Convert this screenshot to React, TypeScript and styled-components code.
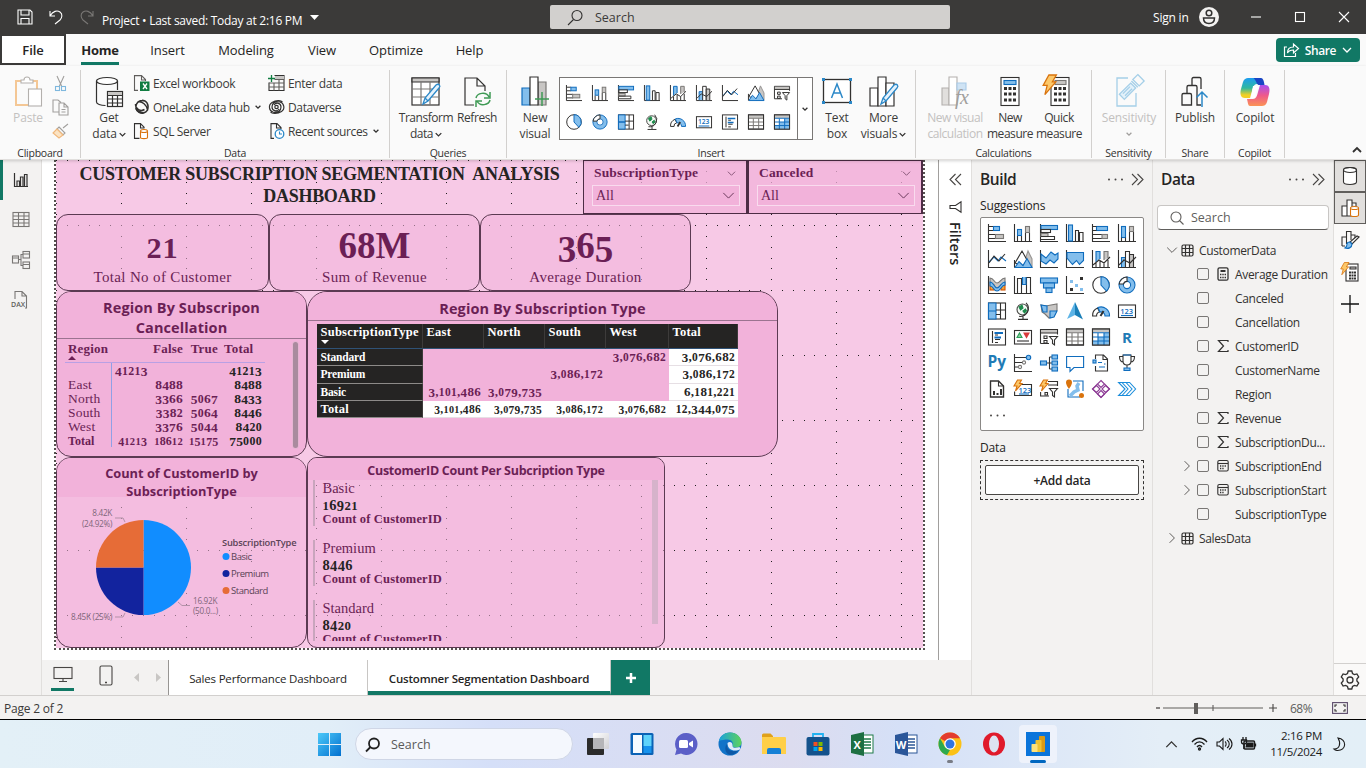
import React from "react";
import styled, { createGlobalStyle, css } from "styled-components";

const INK = "#323130";
const BLUE = "#0f6cbd";
const SKY = "#83beec";
const GREY = "#c8c6c4";
const GREEN = "#117865";
const PLUM = "#6b1f55";
const UI = `"Open Sans", "Noto Sans", sans-serif`;
const SERIF = `"Liberation Serif", serif`;

const Global = createGlobalStyle`
  *, *::before, *::after { box-sizing: border-box; }
  body { margin: 0; font-family: ${UI}; font-size: 12px; color: #252423; overflow: hidden; }
  svg { display: block; flex: none; overflow: visible; }
`;

/* ---------- icons ---------- */

type IconProps = { w?: number; h?: number; box?: string; children?: React.ReactNode; color?: string; sw?: number };
const Icon = ({ w = 16, h, box, children, color = INK, sw = 1.1 }: IconProps) => (
  <svg width={w} height={h ?? w} viewBox={box ?? `0 0 ${w} ${h ?? w}`} fill="none" stroke={color} strokeWidth={sw}>
    {children}
  </svg>
);

const Chevron = ({ w = 7, color = INK, dir = "down", sw = 1.3 }: { w?: number; color?: string; dir?: string; sw?: number }) => (
  <Icon w={w} box="0 0 10 10" color={color} sw={(sw * 10) / w}>
    <path d={dir === "down" ? "M1 3l4 4 4-4" : dir === "up" ? "M1 7l4-4 4 4" : "M3 1l4 4-4 4"} />
  </Icon>
);

const DoubleChevron = ({ left }: { left?: boolean }) => (
  <Icon w={13} sw={1.1} color="#484644">
    <path d={left ? "M6.5 1L1 6.5 6.5 12M12 1L6.5 6.5 12 12" : "M1 1l5.5 5.5L1 12M6.5 1L12 6.5 6.5 12"} />
  </Icon>
);

const axis = <path d="M.5 0V17.5H18" stroke={INK} />;
const glyphs: Record<string, React.ReactNode> = {
  barStack: <>{axis}<path d="M1 2.5h4.500M1 6.500h4.500M1 10.500h7M1 14.500h7" /><rect x="5.500" y="2.500" width="6" height="4" fill={SKY} stroke={BLUE} /><rect x="7.500" y="10.500" width="8" height="4" fill={GREY} stroke="#797775" /></>,
  colStack: <>{axis}<rect x="3.500" y="5.500" width="4" height="6" fill={SKY} stroke={BLUE} /><path d="M3.500 12v5M7.500 12v5M11.500 9v8M15.500 9v8" /><rect x="11.500" y="2.500" width="4" height="6" fill={GREY} stroke="#797775" /></>,
  barCluster: <>{axis}<rect x="1" y="1.500" width="16.500" height="4" fill={SKY} stroke={BLUE} /><rect x="1" y="5.500" width="9.500" height="3" fill="#fff" /><rect x="1" y="9.500" width="7" height="3" fill={GREY} stroke="#797775" /><path d="M1 12.500h13.500v3H1" /></>,
  colCluster: <>{axis}<rect x="2.500" y="1" width="4" height="16" fill={SKY} stroke={BLUE} /><path d="M9.500 17V6.500h3V17M13.500 17V8.500h3.500V17" /></>,
  barFull: <>{axis}<rect x="4.500" y="2.500" width="11" height="4" fill={SKY} stroke={BLUE} /><path d="M1 2.500h3.500M1 6.500h3.500M1 10.500h9M1 14.500h9" /><rect x="10" y="10.500" width="5.500" height="4" fill={GREY} stroke="#797775" /></>,
  colFull: <>{axis}<rect x="3.500" y="2.500" width="4" height="11" fill={SKY} stroke={BLUE} /><path d="M3.500 13.500V17M7.500 13.500V17M11.500 8v9M15.500 8v9" /><rect x="11.500" y="2.500" width="4" height="5" fill={GREY} stroke="#797775" /></>,
  line: <>{axis}<path d="M1 12l5-5 4 4 3-4 5 4" stroke={BLUE} /><path d="M1 13l5-7 5 5 6-7" /></>,
  area: <><path d="M9 16L14 1l4 8v8H9z" fill={GREY} stroke="#979593" /><path d="M1 13l7-12 5 9-4 6z" fill="#fff" /><path d="M1 17.500l4-6 4 4 4-7 5 9z" fill={SKY} stroke={BLUE} /><path d="M.5 10v7.500" /></>,
  areaStack: <>{axis}<path d="M1 4l5 4 5-6 4 3 3-2v6l-4 4-4-3-4 4-5-3z" fill={SKY} stroke={BLUE} /></>,
  areaFull: <>{axis}<path d="M1 2.500h16.500v8l-4 4-3-4-4 4L1 8z" fill={SKY} stroke={BLUE} /></>,
  comboStack: <>{axis}<path d="M4 12V1.500h4V9" fill={SKY} stroke={BLUE} /><path d="M12 10V1.500h4V8" fill={GREY} stroke="#797775" /><path d="M1 15l6-5 5 3 6-6M4 13v4M8 11v6M12 13v4M16 10v7" /></>,
  comboCol: <>{axis}<path d="M3.500 17V7.500h4v9.500" fill={SKY} stroke={BLUE} /><path d="M7.500 17V1.500h4V17" fill="#fff" /><path d="M11.500 17V4.500h4V17" fill={GREY} /><path d="M1 15l5-5 6 3 6-6" /></>,
  ribbon: <><path d="M2 2c4 0 4 5 7 5s4-5 8-5v6c-4 0-5 4-8 4S6 8 2 8z" fill={GREY} stroke="#797775" /><rect x="2" y="9" width="4" height="5" fill="#f2a33a" stroke="#d35400" /><rect x="13" y="9" width="4" height="5" fill="#f2a33a" stroke="#d35400" /><path d="M2 6c4 0 4 6 7 6s4-6 8-6v3c-4 0-4 6-8 6S6 10 2 10z" fill={SKY} stroke={BLUE} />{axis}</>,
  waterfall: <>{axis}<path d="M3.500 17V2.500h4V17M12.500 17V1.500h4V17M7.500 5.500H9" /><path d="M8.500 1v7.500h3.500V1" stroke={BLUE} fill={SKY} /></>,
  funnel: <><rect x=".5" y="2" width="17" height="5" fill={SKY} stroke={BLUE} /><rect x="3.500" y="7" width="11" height="5" fill={SKY} stroke={BLUE} /><rect x="6" y="12" width="6" height="4.500" fill={SKY} stroke={BLUE} /></>,
  scatter: <>{axis}<g stroke="none"><path d="M4 4h3v3H4zM9 8h3v3H9zM14 12h3v3h-3z" fill={SKY} /><path d="M14 1h3v3h-3zM4 12h3v3H4z" fill={INK} /></g></>,
  pie: <><circle cx="9" cy="9" r="8.200" fill="#fff" /><path d="M9 9V.8a8.200 8.200 0 0 1 5.500 14.200z" fill={SKY} stroke={BLUE} /></>,
  donut: <><circle cx="9" cy="9" r="5.800" stroke={SKY} strokeWidth="4" /><circle cx="9" cy="9" r="8" stroke={BLUE} /><circle cx="9" cy="9" r="3.600" stroke={BLUE} fill="#fff" /><path d="M9 1a8 8 0 0 0-7.800 7H5.500A3.600 3.600 0 0 1 9 5.400z" fill="#fff" /></>,
  treemap: <><rect x=".5" y="1" width="17" height="16" fill="#fff" /><path d="M.5 1H8v8H.5zM.5 9H8v8H.5z" fill={SKY} stroke={BLUE} /><path d="M8 8h9.500M12.500 1v7M12.500 8v9M8 12.500h4" /></>,
  map: <><circle cx="8.500" cy="7.500" r="5.500" fill="#f4faf5" stroke="#484644" /><path d="M5 5l3-2 1 3-2.500 2zM9 9l2.500-2 1 2-2 2z" fill="#1f8b4c" stroke="#1f8b4c" /><path d="M12 .8a8 8 0 0 1-7 13.500M9 14.500v2.500M4 17.400h10" /></>,
  filled: <><path d="M1 3l5 1 5-1 6-1v6l-3 6-5 2-4-4-3-2z" fill={GREY} stroke="#797775" /><path d="M1 3l6 1v6H3zM10 9h7l-3 6-4 1z" fill={SKY} stroke={BLUE} /></>,
  arrow: <g stroke="none"><path d="M9 0L1 17l8-4z" fill="#5cb3e6" /><path d="M9 0l8 17.500L9 13z" fill="#1a7fb8" /></g>,
  gauge: <><path d="M.6 14a8 8 0 0 1 5-8l2 4a3.500 3.500 0 0 0-3 4z" fill="#fff" /><path d="M6 5.500a8.500 8.500 0 0 1 11.500 8.500H13a4 4 0 0 0-5-4z" fill={SKY} stroke={BLUE} /><path d="M8.500 14l3-5" strokeWidth="2" /></>,
  card: <><rect x=".5" y="3" width="17" height="12.500" fill="#fff" /><text x="2.200" y="11.500" fontSize="7.500" fill={BLUE} stroke="none" fontWeight="600" fontFamily="Open Sans, sans-serif">123</text><path d="M3 13.500h12" stroke={BLUE} /></>,
  multi: <><rect x=".5" y="1" width="17" height="16" fill="#fff" /><path d="M4.500 3v12M7 7h3M7 11.500h5M7 14.500h3" /><path d="M6.500 5h8.500M6.500 9.500h6.500" stroke={BLUE} strokeWidth="1.800" /></>,
  kpi: <><rect x=".5" y="2.500" width="17" height="13.500" fill="#fff" /><path d="M5.500 5l2.500 4.500H3z" fill="#8fcf9f" stroke="#2ca05a" /><path d="M12.500 9.500L10 5h5z" fill="#d83b3b" stroke="#d83b3b" /><path d="M3 13h12" /></>,
  slicer: <><path d="M.5 15.500V1.500h17v5M.5 15.500H9" /><path d="M1 2h16v3H1z" fill={GREY} stroke="none" /><path d="M.5 5h17M4 8h3v2.500H4zM4 12.500h3V15H4z" /><path d="M9.500 8.500h8L14.500 12v5L12.500 15.500V12z" fill="#fff" /></>,
  table: <><rect x=".5" y="1" width="17" height="16" fill="#fff" /><path d="M1 1.500h16v3H1z" fill={GREY} stroke="none" /><path d="M.5 4.800h17M.5 9h17M.5 13h17M6 5v12M12 5v12" stroke="#797775" /><rect x=".5" y="1" width="17" height="16" /></>,
  matrix: <><rect x=".5" y="1" width="17" height="16" fill="#fff" /><path d="M1 1.500h16v3H1z" fill={GREY} stroke="none" /><path d="M12 5h5.500v12H12zM1 13h11v4H1zM6 9h6v4H6z" fill={SKY} stroke="none" /><path d="M.5 4.800h17M.5 9h17M.5 13h17M6 5v12M12 5v12" stroke={BLUE} /><rect x=".5" y="1" width="17" height="16" /></>,
  r: <text x="4" y="14.500" fontSize="15" fontWeight="700" fill="#1f7bb6" stroke="none" fontFamily="Open Sans, sans-serif">R</text>,
  py: <text x="-.5" y="13" fontSize="15.500" fontWeight="700" fill="#1f7bb6" stroke="none" fontFamily="Open Sans, sans-serif">Py</text>,
  influencer: <>{axis}<path d="M1 3.500h11M1 8.500h7M1 13h3" /><circle cx="14.500" cy="3.500" r="2.200" fill={SKY} stroke={BLUE} /><circle cx="10" cy="8.500" r="1.600" stroke="#797775" /><circle cx="6" cy="13" r="1.600" stroke="#797775" /></>,
  decomp: <><path d="M6 9h6M9.500 3v12M9.500 3h3M9.500 15h3" /><g fill={SKY} stroke={BLUE}><rect x=".5" y="7" width="6" height="4" /><rect x="12" y="1" width="5.500" height="4" /><rect x="12" y="7" width="5.500" height="4" /><rect x="12" y="13" width="5.500" height="4" /></g></>,
  qa: <path d="M.6 2.500h17v11H8l-4 4v-4H.6z" fill="#fff" stroke={BLUE} />,
  narrative: <><path d="M3.500 5V1h8l4 4v12h-12v-5M11 1v4.500h4.500" /><rect x="1" y="6" width="3" height="3" fill={SKY} stroke={BLUE} /><path d="M6 8.500h4M7 13h6M12 10h1.500" stroke={BLUE} /></>,
  trophy: <><path d="M5 1h8v6c0 3-2 4-4 4S5 10 5 7zM5 2.500H1.500C1.500 6 3 8 5.500 8M13 2.500h3.500C16.500 6 15 8 12.500 8M9 11v3" /><path d="M5 1h8M6 14h6v2.500H6z" stroke={BLUE} fill={SKY} /></>,
  paginated: <><path d="M2.500 1h8l5 5v11h-13z" fill="#fff" strokeWidth="1.400" /><path d="M10.500 1v5h5" /><g fill={INK} stroke="none"><path d="M5 11h2v4H5zM8.500 13h2v2h-2zM12 9h2v6h-2z" /></g></>,
  quickCard: <><path d="M7 4.500h10.500v11H.6v-4" /><text x="4.500" y="12.500" fontSize="7.500" fill={BLUE} stroke="none" fontWeight="600" fontFamily="Open Sans, sans-serif">123</text><path d="M5 14h10" stroke={BLUE} /><path d="M3.500 0h4L5.500 3.500H8L1.500 11l1.500-5H0z" fill="#fcc86a" stroke="#d9730d" /></>,
  quickSlicer: <><path d="M8 1.500h9.500v4.500M.6 12v4H9M8 5h9.500" /><path d="M9.500 8.500h8L14.500 12v5L12.500 15.500V12zM5 12.500h2.500V15H5z" fill="#fff" /><path d="M3.500 0h4L5.500 3.500H8L1.500 11l1.500-5H0z" fill="#fcc86a" stroke="#d9730d" /></>,
  arcgis: <><path d="M2 9v8h12M7 1h10v10" stroke={BLUE} /><path d="M13 3l-2 3 1 4-4 2-4 4" stroke={SKY} strokeWidth="3.500" /><path d="M3-.5a3 3 0 0 1 3 3C6 5 3 9 3 9S0 5 0 2.500a3 3 0 0 1 3-3z" fill="#d9730d" stroke="none" /><circle cx="15.500" cy="15.500" r="2.500" fill="#d9730d" stroke="none" /></>,
  apps: <g stroke="#8e3d96" fill="#fff"><path d="M9 .500l3.500 3.500L9 7.500 5.500 4zM4.500 5.500L8 9l-3.500 3.500L.500 9zM13.500 5.500L17.500 9l-4 3.500L10 9zM9 10.500l3.500 3.500L9 17.500 5.500 14z" /><path d="M5.500 4L.500 9 9 17.500 17.500 9l-5-5" fill="none" /></g>,
  automate: <g stroke="#1b8ddb"><path d="M.6 2.500h11l6 6.500-6 6.500H.6L7 9z" fill="#fff" /><path d="M4 2.500L10 9l-6 6.500M8 2.500L14 9l-6 6.500" /></g>,
};
const Glyph = ({ name, size = 18 }: { name: string; size?: number }) => (
  <Icon w={size} box="0 0 18 18" sw={1.100}>{glyphs[name]}</Icon>
);

const Bolt = <path d="M6 0h6.500L9 6h3L2.500 17l2-8H1z" fill="#fcc86a" stroke="#d9730d" />;

/* ---------- title bar ---------- */

const TitleBar = styled.header`
  display: flex; align-items: center; height: 34px; background: #3b3a39; color: #fff; padding-left: 17px;
`;
const QuickAccess = styled.div`display: flex; gap: 15px; width: 85px;`;
const DocName = styled.div`
  display: flex; align-items: center; gap: 8px; width: 448px; padding-top: 6px; font-size: 12px; letter-spacing: -0.27px; white-space: pre;
  svg { margin-top: -5px; }
`;
const TopSearch = styled.div`
  display: flex; align-items: center; gap: 11px; width: 400px; height: 24px; background: #d2d0ce; color: #3b3a39;
  padding-left: 17px; font-size: 12.5px; border-radius: 2px;
`;
const SignIn = styled.div`width: 97px; margin-left: 203px; font-size: 12px; letter-spacing: -0.2px; display: flex; align-items: center; white-space: nowrap;`;
const WindowButtons = styled.div`display: flex; width: 100px; justify-content: space-between; align-items: center;`;
const AvatarSlot = styled.div`margin-left: 10px;`;

const Header = () => (
  <TitleBar>
    <QuickAccess>
      <Icon w={16} color="#fff"><path d="M1 1h12l2 2v12H1zM4 1v5h8V1M4 15V9.500h8V15" /></Icon>
      <Icon w={16} color="#fff"><path d="M2 2v5h5M2 7c3-5 7-6 10-4s2 6 0 8l-5 4" /></Icon>
      <Icon w={16} color="#797775"><path d="M14 2v5H9M14 7C11 2 7 1 4 3S2 9 4 11l5 4" /></Icon>
    </QuickAccess>
    <DocName>
      <span>Project • Last saved: Today at 2:16 PM</span>
      <Icon w={9} h={5}><path d="M0 0h9L4.500 5z" fill="#fff" stroke="none" /></Icon>
    </DocName>
    <TopSearch>
      <Icon w={17}><circle cx="10" cy="6.500" r="5" /><path d="M6.500 10.500L1 16" /></Icon>
      Search
    </TopSearch>
    <SignIn>
      Sign in
      <AvatarSlot>
        <Icon w={20}><circle cx="10" cy="10" r="10" fill="#f3f2f1" stroke="none" /><circle cx="10" cy="6" r="2.800" strokeWidth="1.500" /><path d="M4.500 11h11c0 3.500-2 5.500-5.500 5.500S4.500 14.500 4.500 11z" strokeWidth="1.500" /></Icon>
      </AvatarSlot>
    </SignIn>
    <WindowButtons>
      <Icon w={12} color="#fff"><path d="M1 6h10" /></Icon>
      <Icon w={12} color="#fff"><rect x="1.500" y="1.500" width="9" height="9" /></Icon>
      <Icon w={12} color="#fff"><path d="M1 1l10 10M11 1L1 11" /></Icon>
    </WindowButtons>
  </TitleBar>
);

/* ---------- menu ---------- */

const MenuBar = styled.nav`display: flex; align-items: center; height: 32px; background: #fafafa; padding-right: 6px;`;
const FileTab = styled.div`
  width: 66px; height: 31px; border: 2px solid #3b3a39; align-self: flex-start; display: grid; place-items: center;
  font-size: 13px; font-weight: 600; letter-spacing: -0.1px; color: #252423; background: #fff;
`;
const MenuTab = styled.div<{ $w: number; $on?: boolean }>`
  width: ${(p) => p.$w}px; height: 31px; align-self: flex-start; display: flex; justify-content: center;
  font-size: 13px; letter-spacing: -0.1px; line-height: 33px; font-weight: ${(p) => (p.$on ? 700 : 400)};
  span { border-bottom: ${(p) => (p.$on ? `3px solid ${GREEN}` : "0")}; height: 31px; letter-spacing: ${(p) => (p.$on ? "-0.200px" : "inherit")}; }
`;
const ShareButton = styled.div`
  margin-left: auto; width: 84px; height: 24px; border-radius: 4px; background: ${GREEN}; color: #fff; display: flex;
  align-items: center; justify-content: space-between; padding: 0 8px 0 7px; font-size: 12px; letter-spacing: -0.4px; font-weight: 600;
`;
const tabs: [string, number][] = [["Insert", 67], ["Modeling", 90], ["View", 62], ["Optimize", 86], ["Help", 61]];

const Menu = () => (
  <MenuBar>
    <FileTab>File</FileTab>
    <MenuTab $w={68} $on><span>Home</span></MenuTab>
    {tabs.map(([t, w]) => <MenuTab key={t} $w={w}><span>{t}</span></MenuTab>)}
    <ShareButton>
      <Icon w={16} color="#fff" sw={1.200}><path d="M4 5H1.500v9.500h11V11M4.500 11c0-4 2-6 6-6V2l5 4.500-5 4.500V8c-3 0-5 1-6 3z" /></Icon>
      Share
      <Chevron w={10} color="#fff" />
    </ShareButton>
  </MenuBar>
);

/* ---------- ribbon ---------- */

const Ribbon = styled.section`display: flex; height: 94px; padding-top: 4px; background: #fafafa; border-bottom: 1px solid #e1dfdd; position: relative; z-index: 1; box-shadow: 0 1px 3px rgba(0,0,0,.18);`;
const Group = styled.div<{ $w: number }>`
  width: ${(p) => p.$w}px; height: 88px; border-right: 1px solid #d2d0ce; display: flex; flex-direction: column;
`;
const GroupBody = styled.div<{ $pad?: number; $gap?: number }>`
  display: flex; flex: none; height: 78px; padding: 6px 0 0 ${(p) => p.$pad ?? 0}px; gap: ${(p) => p.$gap ?? 0}px;
`;
const Caption = styled.div`text-align: center; font-size: 10.500px; line-height: 11px; letter-spacing: -0.25px; color: #323130;`;
const BigButton = styled.div<{ $w: number; $off?: boolean; $tight?: boolean }>`
  width: ${(p) => p.$w}px; display: flex; flex-direction: column; align-items: center; gap: 2px; font-size: 12px; line-height: 16px;
  letter-spacing: ${(p) => (p.$tight ? -0.45 : -0.15)}px; text-align: center; color: ${(p) => (p.$off ? "#c3c1bf" : "#3b3a39")}; white-space: nowrap;
  > svg { height: 32px; }
`;
const LabelLine = styled.div`display: flex; justify-content: center; align-items: center; gap: 2px; height: 16px;`;
const CommandColumn = styled.div<{ $w: number }>`width: ${(p) => p.$w}px; display: flex; flex-direction: column; margin-top: -5px;`;
const Command = styled.div`
  display: flex; align-items: center; gap: 3px; height: 24px; font-size: 12px; letter-spacing: -0.37px; color: #3b3a39; white-space: nowrap;
  > svg:last-child:not(:first-child) { margin-left: 2px; }
`;
const IconStack = styled.div`display: flex; flex-direction: column; width: 17px; margin-top: -5px; svg { margin: 3.500px 0; }`;
const Gallery = styled.div`display: flex; width: 254px; height: 63px; margin: 1px 0 0 4px; border: 1px solid #797775; background: #fff;`;
const GalleryGrid = styled.div`display: grid; grid-template-columns: repeat(9, 26px); grid-template-rows: 29px 29px; place-items: center; width: 237px; padding: 0 0 0 1px;`;
const GalleryMore = styled.div`flex: 1; border-left: 1px solid #797775; display: grid; place-items: center;`;
const CollapseSlot = styled.div`margin: 75px 4px 0 auto;`;

const galleryNames = ["barStack", "colStack", "barCluster", "colCluster", "comboStack", "comboCol", "line", "area", "slicer", "pie", "donut", "treemap", "map", "gauge", "card", "multi", "table", "matrix"];

const Bars = () => <g><path d="M2 30V12h8v18z" fill="#fff" /><path d="M10 30V1h8v29z" fill="#fff" /><path d="M18 30V7h8v23z" fill="#fff" /></g>;
const Calc = ({ x = 5 }: { x?: number }) => (
  <g><rect x={x} y="1.500" width="18" height="28" fill="#fff" /><path d={`M${x + 3} 12.500h12M${x + 3} 18h12M${x + 3} 24h12`} strokeWidth="3" strokeDasharray="3 1.500" /></g>
);
const Pencil = <path d="M13 28l2-6L26 9c3-2 5 1 3 3L18 25zM15 22l3 3" fill="#e6f2fb" stroke="#2b88c8" strokeWidth="1.300" />;

const RibbonBar = () => (
  <Ribbon>
    <Group $w={81}>
      <GroupBody $pad={6} $gap={2}>
        <BigButton $w={44} $off>
          <Icon w={30} h={32} color="#b3b0ad"><path d="M3 5h21v24H3z" stroke="#f4c795" strokeWidth="2" /><path d="M8 7V4h3c0-4 6-4 6 0h3v3z" fill="#fff" /><rect x="15.500" y="13" width="13" height="17" fill="#fff" /></Icon>
          <LabelLine>Paste</LabelLine>
        </BigButton>
        <IconStack>
          <Icon w={17} color="#a19f9d"><path d="M5 1l5 11M12 1L7 12" /><rect x="3.500" y="11.500" width="4" height="4" stroke="#7fb8de" /><rect x="9.500" y="11.500" width="4" height="4" stroke="#7fb8de" /></Icon>
          <Icon w={17} color="#a19f9d"><path d="M7 13H1V1h5l3 2.500M7 4h5l4 4v8H7zM12 4v4h4M9.500 10.500h4M9.500 13h4" /></Icon>
          <Icon w={17} color="#a19f9d"><path d="M16 1l-5 4M7 4l6 6-2 2-6-6z" /><path d="M5 6L1 10l6 5 4-3z" fill="#fbe3c3" stroke="#f0b77b" /></Icon>
        </IconStack>
      </GroupBody>
      <Caption>Clipboard</Caption>
    </Group>
    <Group $w={309}>
      <GroupBody $pad={8}>
        <BigButton $w={40}>
          <Icon w={28} h={32} sw={1.200}><ellipse cx="12" cy="5" rx="10.500" ry="3.500" fill="#fff" /><path d="M1.500 5v21c0 2 4 3.500 9 3.500M22.500 5v9" /><rect x="12.500" y="15.500" width="15" height="15" fill="#fff" /><path d="M13 16h14v3H13z" fill={GREY} stroke="none" /><path d="M12.500 19.500h15M12.500 23h15M12.500 27h15M17.500 19v11M22.500 19v11" /></Icon>
          <div><LabelLine>Get</LabelLine><LabelLine>data <Chevron /></LabelLine></div>
        </BigButton>
        <CommandColumn $w={139}>
          <Command><Icon w={21} h={16} box="-5 0 21 16"><path d="M4 15.400H.5V.6h7l4 4V6M7.500.6V5h4" stroke="#605e5c" /><rect x="6" y="6.500" width="9.500" height="9.500" fill="#107c41" stroke="none" /><path d="M9 8.500l4 5.500M13 8.500L9 14" stroke="#fff" strokeWidth="1.300" /></Icon>Excel workbook</Command>
          <Command><Icon w={21} h={16} box="-5 0 21 16" sw={1.500}><path d="M11 2.200a6.300 6.300 0 1 0 2.500 9M1.500 5c0 5 5 8 9 5.500M4 3c4-1 9 3 9.500 8M8 1.200c4 0 7.500 4 5.500 10" /><path d="M1 9c1 4 6 7 10 4-4 0-7-2-10-4z" fill={INK} stroke="none" /></Icon>OneLake data hub <Chevron w={6} /></Command>
          <Command><Icon w={21} h={16} box="-5 0 21 16"><path d="M5.500 15.400H.5V.6h6l4 4M6.500.6V5h4" /><g stroke="#d9730d" fill="#fff"><path d="M6.500 8.500v6c0 1.500 7 1.500 7 0v-6" /><ellipse cx="10" cy="8" rx="3.500" ry="1.500" /></g></Icon>SQL Server</Command>
        </CommandColumn>
        <CommandColumn $w={115}>
          <Command><Icon w={17} h={16}><path d="M6.500.5H16v15H1V7.500" /><path d="M7 1h9v3H7z" fill={GREY} stroke="none" /><path d="M6.500 4.500H16M1 8h15M1 12h15M6 8v7.500M11 4v11.500" stroke="#605e5c" /><path d="M3.500 0v7M0 3.500h7" stroke="#107c41" strokeWidth="1.300" /></Icon>Enter data</Command>
          <Command><Icon w={17} h={16} sw={1.200}><path d="M5 13C1 12 0 6 4 3.500S13 1 14.500 3M12 3c4 1 5.500 7 1.500 9.500S4 15 2.500 13M5 13c5 1 8-1 8-5M12 3C7 2 4 4 4 8M4 8c0 4 5 5 7 2M13 8c0-4-5-5-7-2" /><circle cx="8.500" cy="8" r="1.700" /></Icon>Dataverse</Command>
          <Command><Icon w={17} h={16}><path d="M6 15.400H3V.6h6l4 4V6M8.500.6V5h4" /><circle cx="11.500" cy="11" r="4.300" fill="#fff" stroke="#2b88c8" strokeWidth="1.300" /><path d="M11.500 8.500V11H14" stroke="#2b88c8" /></Icon>Recent sources <Chevron w={6} /></Command>
        </CommandColumn>
      </GroupBody>
      <Caption>Data</Caption>
    </Group>
    <Group $w={117}>
      <GroupBody $pad={8} $gap={2}>
        <BigButton $w={56} $tight>
          <Icon w={32} sw={1.200}><rect x="2" y="2" width="27" height="27" fill="#fff" /><path d="M2 2h27v4H2z" fill={GREY} /><path d="M2 13h27M2 21h27M11 6v23M20 6v23" stroke="#797775" />{Pencil}</Icon>
          <div><LabelLine>Transform</LabelLine><LabelLine>data <Chevron /></LabelLine></div>
        </BigButton>
        <BigButton $w={42} $tight>
          <Icon w={30} h={32} sw={1.200}><path d="M12 29H3V2h12l8 8v5M15 2v8h8" /><path d="M14 22c1-5 10-7 13-1M28 16v6h-6M28 24c-1 5-10 7-13 1M14 31v-6h6" stroke="#3f9a55" strokeWidth="1.500" /></Icon>
          <LabelLine>Refresh</LabelLine>
        </BigButton>
      </GroupBody>
      <Caption>Queries</Caption>
    </Group>
    <Group $w={409}>
      <GroupBody $pad={8}>
        <BigButton $w={40}>
          <Icon w={30} h={32} sw={1.200}><path d="M18 6h8v23h-8z" fill={GREY} stroke="#797775" /><path d="M2 12h8v17H2z" fill={SKY} stroke={BLUE} /><path d="M10 1h8v28h-8z" fill="#fff" /><path d="M22 16v14M15 23h14" stroke="#3f9a55" strokeWidth="1.500" /></Icon>
          <div><LabelLine>New</LabelLine><LabelLine>visual</LabelLine></div>
        </BigButton>
        <div>
          <Gallery>
            <GalleryGrid>{galleryNames.map((n) => <Glyph key={n} name={n} size={16} />)}</GalleryGrid>
            <GalleryMore><Chevron w={6} /></GalleryMore>
          </Gallery>
        </div>
        <BigButton $w={48}>
          <Icon w={32} sw={1.300}><rect x="2.500" y="3.500" width="27" height="23" fill="#fff" /><g fill="#2b88c8" stroke="none"><path d="M1 2h3v3H1zM28 2h3v3h-3zM1 25h3v3H1zM28 25h3v3h-3z" /></g><path d="M10.500 22L16 8 21.500 22M12.500 17h7" stroke="#2b88c8" strokeWidth="1.500" /></Icon>
          <div><LabelLine>Text</LabelLine><LabelLine>box</LabelLine></div>
        </BigButton>
        <BigButton $w={45}>
          <Icon w={32} sw={1.200}><Bars />{Pencil}</Icon>
          <div><LabelLine>More</LabelLine><LabelLine>visuals<Chevron /></LabelLine></div>
        </BigButton>
      </GroupBody>
      <Caption>Insert</Caption>
    </Group>
    <Group $w={176}>
      <GroupBody $pad={8}>
        <BigButton $w={62} $off $tight>
          <Icon w={30} h={32}><g stroke="#b3b0ad"><path d="M2 12h7v17H2z" fill="#e1dfdd" /><path d="M9 1h8v28H9z" fill="#fff" /><path d="M17 7h9v7h-9z" fill="#cfe3f4" stroke="#a9cbe8" /></g><text x="15" y="28" fontSize="20" fontStyle="italic" fill="#a19f9d" stroke="none" fontFamily="Liberation Serif, serif">fx</text></Icon>
          <div><LabelLine>New visual</LabelLine><LabelLine>calculation</LabelLine></div>
        </BigButton>
        <BigButton $w={48} $tight>
          <Icon w={28} h={32}><Calc /><rect x="8" y="4.500" width="12" height="4" fill={SKY} stroke={BLUE} /></Icon>
          <div><LabelLine>New</LabelLine><LabelLine>measure</LabelLine></div>
        </BigButton>
        <BigButton $w={50} $tight>
          <Icon w={32}><Calc x={8} /><rect x="12" y="4.500" width="11" height="4" fill={GREY} stroke="#797775" /><g transform="translate(-1 -1) scale(1.150)">{Bolt}</g></Icon>
          <div><LabelLine>Quick</LabelLine><LabelLine>measure</LabelLine></div>
        </BigButton>
      </GroupBody>
      <Caption>Calculations</Caption>
    </Group>
    <Group $w={74}>
      <GroupBody $pad={6}>
        <BigButton $w={62} $off>
          <Icon w={30} h={32} color="#a5cfe8" sw={1.300}><path d="M14 2H3v28h19V17" /><g transform="rotate(45 16 12)"><rect x="13" y="8" width="7" height="16" fill="#e3f1fa" /><path d="M12-3h9v7h-9zM15 11v10M18 11v10M12 6h9" /></g></Icon>
          <div><LabelLine>Sensitivity</LabelLine><LabelLine><Chevron w={6} color="#a19f9d" /></LabelLine></div>
        </BigButton>
      </GroupBody>
      <Caption>Sensitivity</Caption>
    </Group>
    <Group $w={59}>
      <GroupBody $pad={5}>
        <BigButton $w={48}>
          <Icon w={30} h={32} sw={1.300}><path d="M12 10V3q0-1.500 1.500-1.500h6Q21 1.500 21 3v10M7 17v-6q0-1.500 1.500-1.500h7q1.500 0 1.500 1.500v18h4M3.500 17.500H10q1.500 0 1.500 1.500v10H2V19q0-1.500 1.500-1.500z" /><path d="M22 31V16M16.500 21.500L22 16l5.500 5.500" stroke="#2b88c8" strokeWidth="1.500" /></Icon>
          <LabelLine>Publish</LabelLine>
        </BigButton>
      </GroupBody>
      <Caption>Share</Caption>
    </Group>
    <Group $w={60}>
      <GroupBody $pad={5}>
        <BigButton $w={50}>
          <svg width="30" height="32" viewBox="0 0 30 32">
            <defs>
              <linearGradient id="cpA" x1="0" y1="0" x2="0" y2="1"><stop offset="0" stopColor="#1c9cf0" /><stop offset=".5" stopColor="#2eb8a0" /><stop offset=".85" stopColor="#f3cf24" /></linearGradient>
              <linearGradient id="cpB" x1="0" y1="0" x2="0" y2="1"><stop offset="0" stopColor="#a94ff0" /><stop offset=".5" stopColor="#ef5a8a" /><stop offset="1" stopColor="#fb9455" /></linearGradient>
            </defs>
            <path d="M8 2h12c2 0 2 3 3 6h-6c-3 0-4 3-5 7l-2 7H5c-5 0-5-5-4-9l2-7c1-3 3-4 5-4z" fill="url(#cpA)" />
            <path d="M17 2h4c2 0 3 3 3.500 7h-6c-2-1-2-4-5-7z" fill="#1a45c4" />
            <path d="M22 30H10c-2 0-2-3-3-7h6c3 0 4-3 5-7l2-7h5c5 0 5 5 4 9l-2 8c-1 3-3 4-5 4z" fill="url(#cpB)" />
            <path d="M13 10h5l-3 12h-4z" fill="#fff" />
          </svg>
          <LabelLine>Copilot</LabelLine>
        </BigButton>
      </GroupBody>
      <Caption>Copilot</Caption>
    </Group>
    <CollapseSlot><Chevron w={10} dir="up" sw={1.800} /></CollapseSlot>
  </Ribbon>
);

/* ---------- report canvas ---------- */

const Main = styled.main`display: flex; height: 535px; background: #f3f2f1;`;
const LeftRail = styled.aside`width: 42px; border-right: 1px solid #e1dfdd; background: #f3f2f1;`;
const RailItem = styled.div<{ $on?: boolean }>`
  height: 40px; display: grid; place-items: center; border-left: 3px solid ${(p) => (p.$on ? GREEN : "transparent")}; padding-right: 2px;
`;
const Center = styled.div`width: 929px; display: flex; flex-direction: column;`;
const Stage = styled.div`display: flex; height: 500px; background: #fff;`;
const CanvasArea = styled.div`width: 897px; padding-left: 12px; border-right: 1px solid #a19f9d;`;
const Canvas = styled.div`
  position: relative; width: 871px; height: 490px; border: 2px dotted #55504f; border-top: 0; background: #f7c9e6; background-clip: padding-box; font-family: ${SERIF}; color: ${PLUM};
`;
const DotGrid = styled.svg`position: absolute; inset: 0; width: 100%; height: 100%;`;
const Rows = styled.div`position: relative; display: flex; flex-direction: column;`;
const Row = styled.div<{ $h: number }>`display: flex; height: ${(p) => p.$h}px;`;
const Tile = styled.section<{ $w: number; $r: number; $solid?: boolean }>`
  width: ${(p) => p.$w}px; border: 1px solid #5b3a52; border-radius: ${(p) => p.$r}px; overflow: hidden;
  background: ${(p) => (p.$solid ? "#f2b2da" : "rgba(242,178,218,.55)")}; display: flex; flex-direction: column;
`;
const ReportTitle = styled.h1`
  width: 527px; margin: 0; padding-top: 4px; text-align: center; white-space: pre; font-size: 18px; line-height: 21.500px; font-weight: 700; color: #252423; letter-spacing: -0.260px;
`;
const Slicer = styled.section<{ $w: number }>`
  width: ${(p) => p.$w}px; height: 54px; border: 1px solid #4d2c45; border-width: 1px 2px 1px 1px; background: rgba(242,178,218,.75); padding: 3px 6px 0 9px;
`;
const SlicerHead = styled.div`display: flex; justify-content: space-between; align-items: center; height: 18px; font-weight: 700; font-size: 13.500px; padding: 0 4px 0 1px; letter-spacing: 0.15px;`;
const SlicerBox = styled.div`display: flex; justify-content: space-between; align-items: center; height: 21px; margin: 3px 0 0 -1px; border: 1px solid #f9dbee; background: #f2b2da; padding: 0 4px 0 3px; font-size: 14px;`;
const CardValue = styled.div`font-size: 37px; font-weight: 700; text-align: center; line-height: 40px; height: 40px; margin-top: 11px; letter-spacing: 0;`;
const CardLabel = styled.div`font-size: 15px; text-align: center; line-height: 16px; margin-top: 3px; letter-spacing: 0.350px; white-space: nowrap;`;
const TileTitle = styled.h2<{ $h: number; $size: number; $line?: boolean; $lh?: number; $ls?: number; $drop?: number }>`
  margin: 0; padding-top: ${(p) => p.$drop ?? 0}px; flex: none; height: ${(p) => p.$h}px; display: flex; flex-direction: column; justify-content: center; text-align: center; white-space: pre-line;
  font-family: ${UI}; font-weight: 700; font-size: ${(p) => p.$size}px; line-height: ${(p) => p.$lh ?? 18}px; letter-spacing: ${(p) => p.$ls ?? 0}px; background: #f2b2da;
  ${(p) => p.$line && css`border-bottom: 1px solid #9b7390;`}
`;
const SmallDigit = styled.span<{ $big?: boolean }>`font-size: ${(p) => (p.$big ? 0.82 : 0.88)}em; line-height: 0; letter-spacing: 0.03em;`;
const LowDigit = styled.span<{ $big?: boolean }>`vertical-align: ${(p) => (p.$big ? -0.12 : -0.09)}em; line-height: 0;`;

/** Old-style figures: 0-2 sit at x-height, 3 4 5 7 9 hang below the baseline. */
const Figures = ({ v, big }: { v: string; big?: boolean }) => (
  <span>
    {v.split("").map((c, i) => ("012".includes(c) ? <SmallDigit key={i} $big={big}>{c}</SmallDigit> : "34579".includes(c) ? <LowDigit key={i} $big={big}>{c}</LowDigit> : c))}
  </span>
);

const MatrixA = styled.div`display: flex; position: relative; flex: 1; padding: 3px 8px 0 8px; justify-content: space-between;`;
const GridA = styled.div`
  display: grid; grid-template-columns: 47px 38px 36px 35px 44px; grid-template-rows: 21px repeat(6, 14px); width: 200px; align-items: center;
`;
const CellA = styled.div<{ $left?: boolean; $dark?: boolean; $plain?: boolean; $edge?: boolean; $head?: boolean; $small?: boolean }>`
  text-align: ${(p) => (p.$left ? "left" : "right")}; height: 100%; line-height: ${(p) => (p.$head ? 14 : 16)}px; padding: 0 3px; white-space: nowrap;
  font-weight: ${(p) => (p.$plain ? 400 : 700)}; font-size: ${(p) => (p.$head ? 13 : p.$small ? 12 : 13.5)}px; letter-spacing: ${(p) => (p.$small ? 0 : 0.2)}px;
  color: ${(p) => (p.$dark ? "#252423" : PLUM)};
  border-right: ${(p) => (p.$edge ? "1px solid #8fa0e6" : "0")}; border-bottom: ${(p) => (p.$head ? "1px solid #b9a0e4" : "0")};
`;
const SortMark = styled.i<{ $down?: boolean; $c?: string }>`
  display: block; width: 0; height: 0; border: 4px solid transparent; border-${(p) => (p.$down ? "top" : "bottom")}-color: ${(p) => p.$c ?? PLUM};
  margin-top: ${(p) => (p.$down ? 0 : -4)}px; margin-left: 0;
`;
const ScrollThumb = styled.div`width: 5px; height: 106px; border-radius: 3px; background: #a98b9e; flex: none; box-shadow: 0 0 0 1px #e6b5d3;`;
const ListThumb = styled.div`width: 6px; height: 144px; background: #d6b3cb; flex: none;`;

const GridB = styled.div`
  display: grid; grid-template-columns: 106px 61px 61px 61px 63px 69px; grid-template-rows: 25px repeat(4, 17.300px); margin: 3px 0 0 9px; width: 421px; font-weight: 700; font-size: 12px;
`;
const CellB = styled.div<{ $k: "head" | "side" | "val" | "tot" | "sum"; $bold?: boolean }>`
  padding: 0 3px 0 3.500px; white-space: nowrap; line-height: 16px; border-bottom: 1px solid #6f5468;
  ${(p) => (p.$k === "head"
    ? css`background: #252423; color: #fff; font-size: 12.500px; border-right: 1px solid #3d3b3a; letter-spacing: 0.250px; border-bottom-color: #2f5276;`
    : p.$k === "side"
    ? css`background: #252423; color: #fff; font-size: ${p.$bold ? 12.500 : 11.500}px; border-right: 1px solid #3d3b3a; letter-spacing: ${p.$bold ? 0.200 : -0.150}px; border-bottom-color: #8d8a88;`
    : p.$k === "val"
    ? css`text-align: right; color: ${PLUM}; font-size: 13px; border-bottom-color: #f2b2da; letter-spacing: 0.3px;`
    : css`text-align: right; background: #fff; color: #252423; font-size: ${p.$k === "sum" ? 13 : 11.500}px; border-bottom-color: #e6dfe4; letter-spacing: 0.300px;`)}
`;

const listItems: [string, string][] = [["Basic", "16921"], ["Premium", "8446"], ["Standard", "8420"]];
const ListBody = styled.div`display: flex; justify-content: space-between; height: 161px; padding: 0 6px 0 5px; overflow: hidden;`;
const ListColumn = styled.div`display: flex; flex-direction: column; gap: 14px;`;
const ListItem = styled.div`height: 46px; flex: none; border-left: 2px solid #c9a5bd; padding-left: 7.500px; font-weight: 700;`;
const ListName = styled.div`font-weight: 400; font-size: 14.500px; line-height: 17px;`;
const ListNumber = styled.div`font-size: 14.500px; line-height: 16px; letter-spacing: 0.300px; color: #252423;`;
const ListMeasure = styled.div`line-height: 12px; font-size: 12.500px; letter-spacing: 0.150px;`;

const rowsA = [
  ["", "41213", "", "", "41213"], ["East", "", "8488", "", "8488"], ["North", "", "3366", "5067", "8433"],
  ["South", "", "3382", "5064", "8446"], ["West", "", "3376", "5044", "8420"], ["Total", "41213", "18612", "15175", "75000"],
];
const rowsB = [
  ["Standard", "", "", "", "3,076,682", "3,076,682"], ["Premium", "", "", "3,086,172", "", "3,086,172"],
  ["Basic", "3,101,486", "3,079,735", "", "", "6,181,221"], ["Total", "3,101,486", "3,079,735", "3,086,172", "3,076,682", "12,344,075"],
];
const steps = [0, 11, 22, 33, 43, 54];

const PieChart = () => (
  <svg width="249" height="150" viewBox="57 497 249 150" fontFamily="Open Sans, sans-serif">
    <path d="M143.500 567.500V520a47.500 47.500 0 0 1 0 95z" fill="#118dff" />
    <path d="M143.500 567.500V615A47.500 47.500 0 0 1 96 567.500z" fill="#12239e" />
    <path d="M143.500 567.500H96A47.500 47.500 0 0 1 143.500 520z" fill="#e66c37" />
    <g fontSize="8.200" fill="#80667a" letterSpacing="-.3">
      <text x="112" y="516" textAnchor="end">8.42K</text>
      <text x="112" y="527" textAnchor="end">(24.92%)</text>
      <text x="112" y="620" textAnchor="end">8.45K (25%)</text>
      <text x="193" y="604">16.92K</text>
      <text x="193" y="614">(50.0...)</text>
    </g>
    <path d="M115 518h8l2 4M115 617h8l2-4M178 602l4 3.500h8" fill="none" stroke="#b391a8" />
    <text x="222" y="546" fontSize="9.300" fontWeight="600" fill="#5a4356" letterSpacing="-.2">SubscriptionType</text>
    {[["Basic", "#118dff"], ["Premium", "#12239e"], ["Standard", "#e66c37"]].map(([t, c], i) => (
      <g key={t}>
        <circle cx="226" cy={556.500 + i * 17} r="3.500" fill={c} />
        <text x="231" y={560 + i * 17} fontSize="9.500" fill="#5a4356" letterSpacing="-.45">{t}</text>
      </g>
    ))}
  </svg>
);

const Report = () => (
  <Canvas>
    <DotGrid shapeRendering="crispEdges">
      <defs>
        <pattern id="dots" width="65" height="65" patternUnits="userSpaceOnUse">
          {steps.map((s) => <rect key={`c${s}`} x="0" y={s} width="1" height="1" fill="#1f1f1f" />)}
          {steps.map((s) => <rect key={`r${s}`} x={s} y="0" width="1" height="1" fill="#1f1f1f" />)}
        </pattern>
      </defs>
      <rect width="867" height="488" fill="url(#dots)" />
    </DotGrid>
    <Rows>
      <Row $h={54}>
        <ReportTitle>{"CUSTOMER SUBSCRIPTION SEGMENTATION  ANALYSIS\nDASHBOARD"}</ReportTitle>
        {[["SubscriptionType", 165], ["Canceled", 175]].map(([t, w]) => (
          <Slicer key={t} $w={w as number}>
            <SlicerHead>{t}<Chevron w={9} color="#8c5a7c" sw={1} /></SlicerHead>
            <SlicerBox>All<Chevron w={13} color="#6b3a5c" sw={1} /></SlicerBox>
          </Slicer>
        ))}
      </Row>
      <Row $h={77}>
        {[["21", "Total No of Customer", 213], ["68M", "Sum of Revenue", 211], ["365", "Average Duration", 211]].map(([v, l, w]) => (
          <Tile key={v} $w={w as number} $r={12}>
            <CardValue><Figures v={v as string} big /></CardValue>
            <CardLabel>{l}</CardLabel>
          </Tile>
        ))}
      </Row>
      <Row $h={166}>
        <Tile $w={251} $r={15} $solid>
          <TileTitle $h={47} $size={14.500} $lh={20} $line $ls={0.1} $drop={5}>{"Region By Subscripon\nCancellation"}</TileTitle>
          <MatrixA>
            <GridA>
              <CellA $left $head>Region<SortMark /></CellA>
              <CellA $head /><CellA $head>False</CellA><CellA $head>True</CellA><CellA $head $left>Total</CellA>
              {rowsA.map((r, y) => r.map((c, x) => (
                <CellA key={`${y}-${x}`} $left={x === 0} $plain={x === 0 && y < 5} $edge={x === 0} $dark={x === 4} $small={y === 5 && x < 4}>
                  {x ? <Figures v={c} /> : c}
                </CellA>
              )))}
            </GridA>
            <ScrollThumb />
          </MatrixA>
        </Tile>
        <Tile $w={471} $r={20} $solid>
          <TileTitle $h={29} $size={14.500} $line $ls={0.1} $drop={5}>Region By Subscription Type</TileTitle>
          <GridB>
            <CellB $k="head">SubscriptionType<SortMark $down $c="#fff" /></CellB>
            {["East", "North", "South", "West", "Total"].map((t) => <CellB key={t} $k="head">{t}</CellB>)}
            {rowsB.map((r, y) => r.map((c, x) => (
              <CellB key={`${y}-${x}`} $bold={y === 3} $k={x === 0 ? "side" : x === 5 ? "sum" : y === 3 ? "tot" : "val"}>{x ? <Figures v={c} /> : c}</CellB>
            )))}
          </GridB>
        </Tile>
      </Row>
      <Row $h={191}>
        <Tile $w={251} $r={15}>
          <TileTitle $h={39} $size={12.800} $lh={18} $drop={8}>{"Count of CustomerID by\nSubscriptionType"}</TileTitle>
          <PieChart />
        </Tile>
        <Tile $w={358} $r={10}>
          <TileTitle $h={22} $size={12.500} $ls={-0.27} $drop={3}>CustomerID Count Per Subcription Type</TileTitle>
          <ListBody>
            <ListColumn>
              {listItems.map(([n, v]) => (
                <ListItem key={n}>
                  <ListName>{n}</ListName>
                  <ListNumber><Figures v={v} /></ListNumber>
                  <ListMeasure>Count of CustomerID</ListMeasure>
                </ListItem>
              ))}
            </ListColumn>
            <ListThumb />
          </ListBody>
        </Tile>
      </Row>
    </Rows>
  </Canvas>
);

/* ---------- page tabs ---------- */

const PageBar = styled.div`display: flex; height: 35px; background: #f3f2f1;`;
const ViewIcons = styled.div`width: 127px; display: flex; align-items: flex-start; padding: 5px 7px 0 9px; border-right: 1px solid #979593;`;
const DesktopView = styled.div`width: 24px; height: 26px; display: flex; justify-content: center; border-bottom: 3px solid ${GREEN};`;
const PhoneView = styled.div`width: 14px; margin-left: 25px;`;
const Pagers = styled.div`display: flex; gap: 17px; margin: 8px 0 0 21px;`;
const PageTab = styled.div<{ $w: number; $on?: boolean }>`
  width: ${(p) => p.$w}px; background: #fff; border-right: 1px solid #c8c6c4; border-bottom: ${(p) => (p.$on ? `4px solid ${GREEN}` : "0")};
  text-align: center; line-height: 37px; font-size: 11.500px; letter-spacing: -0.180px; font-weight: ${(p) => (p.$on ? 600 : 400)}; white-space: nowrap;
`;
const AddPage = styled.div`width: 39px; background: ${GREEN}; display: grid; place-items: center;`;

/* ---------- side panes ---------- */

const FiltersPane = styled.div`width: 32px; display: flex; flex-direction: column; align-items: center; gap: 15px; padding-top: 13px; background: #fff;`;
const Vertical = styled.div`writing-mode: vertical-rl; font-size: 14.500px; font-weight: 600; line-height: 18px; margin-top: -6px; letter-spacing: 0;`;
const Pane = styled.section<{ $w: number }>`width: ${(p) => p.$w}px; border-left: 1px solid #e1dfdd; background: #f3f2f1; display: flex; flex-direction: column;`;
const PaneHead = styled.div`display: flex; align-items: center; gap: 7px; height: 38px; padding: 0 8px; font-size: 15.500px; letter-spacing: -0.4px; b { font-weight: 600; margin-right: auto; }`;
const PaneLabel = styled.div`font-size: 12px; letter-spacing: -0.15px; line-height: 16px; padding-left: 8px;`;
const VisualBox = styled.div`
  width: 164px; height: 214px; margin: 3px 0 9px 8px; border: 1px solid #8a8886; border-radius: 2px; background: #fff;
  display: grid; grid-template-columns: repeat(6, 26px); grid-auto-rows: 26px; place-items: center; padding: 2px 3px;
`;
const DropZone = styled.div`margin: 4px 0 0 8px; width: 164px; height: 40px; border: 1px dashed #323130; padding: 4px;`;
const AddData = styled.div`height: 30px; border: 1px solid #484644; border-radius: 2px; background: #fff; text-align: center; line-height: 29px; font-size: 12px; font-weight: 600; letter-spacing: -0.2px;`;
const Dots = () => (
  <Icon w={17} h={3}><g fill="#484644" stroke="none"><circle cx="2" cy="1.500" r="1" /><circle cx="8.500" cy="1.500" r="1" /><circle cx="15" cy="1.500" r="1" /></g></Icon>
);
const DataSearch = styled.div`
  width: 172px; height: 25px; margin: 7px 0 8px 4px; border: 1px solid #c8c6c4; border-bottom-color: #605e5c; border-radius: 4px; background: #fff;
  display: flex; align-items: center; gap: 7px; padding-left: 12px; font-size: 12.500px; color: #605e5c;
`;
const TableRow = styled.div`display: flex; align-items: center; height: 24px; padding-left: 13px; font-size: 12px; letter-spacing: -0.35px; gap: 3px; white-space: nowrap; color: #323130; svg + svg { margin-right: 2px; }`;
const FieldRow = styled.div`display: grid; grid-template-columns: 16px 20px 18px 1fr; align-items: center; height: 24px; padding-left: 28px; font-size: 12px; letter-spacing: -0.32px; white-space: nowrap; color: #323130;`;
const CheckBox = styled.i`width: 12px; height: 12px; border: 1px solid #797775; border-radius: 2px;`;

const visuals = ["barStack", "colStack", "barCluster", "colCluster", "barFull", "colFull", "line", "area", "areaStack", "areaFull", "comboStack", "comboCol", "ribbon", "waterfall", "funnel", "scatter", "pie", "donut", "treemap", "map", "filled", "arrow", "gauge", "card", "multi", "kpi", "slicer", "table", "matrix", "r", "py", "influencer", "decomp", "qa", "narrative", "trophy", "paginated", "quickCard", "quickSlicer", "arcgis", "apps", "automate"];

const fields: [string, string][] = [
  ["Average Duration", "calc"], ["Canceled", ""], ["Cancellation", ""], ["CustomerID", "sum"], ["CustomerName", ""], ["Region", ""],
  ["Revenue", "sum"], ["SubscriptionDu...", "sum"], ["SubscriptionEnd", "date"], ["SubscriptionStart", "date"], ["SubscriptionType", ""],
];
const fieldIcons: Record<string, React.ReactNode> = {
  calc: <Icon w={12} h={14} sw={1.300}><rect x="1" y=".8" width="10" height="12.400" rx="1.500" /><path d="M3.500 4h5" strokeWidth="2" /><path d="M3 7.500h6M3 10.500h6" strokeWidth="1.400" strokeDasharray="1.400 .9" /></Icon>,
  sum: <Icon w={12} h={14} sw={1.200}><path d="M11 3V1.500H1.500L6.500 7l-5 5.500H11V11" /></Icon>,
  date: <Icon w={12} h={14} sw={1.100}><rect x=".8" y="1.500" width="10.400" height="10.500" rx="1.500" /><path d="M1 4.500h10" /><path d="M3 7h6M3 9.500h4" strokeDasharray="1.300 1" strokeWidth="1.300" /></Icon>,
};
const GridTable = () => <Icon w={13} sw={1.200}><rect x="1" y="1" width="11" height="11" rx="1.500" /><path d="M1 4.500h11M1 8.500h11M4.500 1v11M8.500 1v11" /></Icon>;

const RightRail = styled.aside`width: 33px; background: #faf9f8; border-left: 1px solid #e1dfdd; display: flex; flex-direction: column;`;
const RailButton = styled.div<{ $on?: boolean }>`height: 32px; display: grid; place-items: center; ${(p) => p.$on && css`background: #e1dfdd; border: 1px solid #605e5c;`}`;
const GearSlot = styled.div`margin-top: auto; height: 32px; border-top: 1px solid #d2d0ce; display: grid; place-items: center;`;

const MainArea = () => (
  <Main>
    <LeftRail>
      <RailItem $on><Icon w={16} sw={1.200}><path d="M1.500 1v13.500H15M4 14V9h2.500v5M7.500 14V5H10v9M11.500 14V2.500H14V14" /></Icon></RailItem>
      <RailItem><Icon w={18} color="#797775" box="0 0 18 18"><rect x="1" y="1.500" width="16" height="14" /><path d="M1 5h16M1 8.500h16M1 12h16M6.500 2v13M12 2v13" /></Icon></RailItem>
      <RailItem><Icon w={20} color="#797775"><rect x="1.500" y="6" width="6" height="7" /><rect x="12" y="1.500" width="6.500" height="6.500" /><rect x="12" y="12" width="6.500" height="6.500" /><path d="M7.500 9.500h2.500M12 4.500h-2v11h2M12 4h6.500M1.500 8h6M12 14.500h6.500" /></Icon></RailItem>
      <RailItem><Icon w={20} color="#797775"><path d="M4 9V1.500h7l4.500 4.500v12H14M11 1.500V6h4.500" /><text x="0" y="17" fontSize="7" stroke="none" fill="#605e5c" fontWeight="600" fontFamily="Open Sans, sans-serif">DAX</text></Icon></RailItem>
    </LeftRail>
    <Center>
      <Stage>
        <CanvasArea><Report /></CanvasArea>
        <FiltersPane>
          <DoubleChevron left />
          <Icon w={13} h={12}><path d="M12 .8v10.400L6.500 7.500H1v-3h5.500z" /></Icon>
          <Vertical>Filters</Vertical>
        </FiltersPane>
      </Stage>
      <PageBar>
        <ViewIcons>
          <DesktopView><Icon w={20} h={18} color="#484644"><rect x="1" y="2.500" width="18" height="11" /><path d="M10 13.500v3M6 16.500h8" /></Icon></DesktopView>
          <PhoneView><Icon w={14} h={21} color="#484644"><rect x="1" y="1" width="12" height="19" rx="1.500" /><path d="M6 17.500h2" strokeWidth="1.500" /></Icon></PhoneView>
          <Pagers>
            <Icon w={5} h={9}><path d="M5 0v9L0 4.500z" fill="#c8c6c4" stroke="none" /></Icon>
            <Icon w={5} h={9}><path d="M0 0v9l5-4.500z" fill="#c8c6c4" stroke="none" /></Icon>
          </Pagers>
        </ViewIcons>
        <PageTab $w={199}>Sales Performance Dashboard</PageTab>
        <PageTab $w={243} $on>Customner Segmentation Dashboard</PageTab>
        <AddPage><Icon w={12} color="#fff" sw={2.500}><path d="M6 1v10M1 6h10" /></Icon></AddPage>
      </PageBar>
    </Center>
    <Pane $w={181}>
      <PaneHead><b>Build</b><Dots /><DoubleChevron /></PaneHead>
      <PaneLabel>Suggestions</PaneLabel>
      <VisualBox>
        {visuals.map((v) => <Glyph key={v} name={v} />)}
        <Dots />
      </VisualBox>
      <PaneLabel>Data</PaneLabel>
      <DropZone><AddData>+Add data</AddData></DropZone>
    </Pane>
    <Pane $w={181}>
      <PaneHead><b>Data</b><Dots /><DoubleChevron /></PaneHead>
      <DataSearch><Icon w={14} color="#605e5c"><circle cx="6" cy="6" r="5" /><path d="M9.500 9.500L13.500 13.500" /></Icon>Search</DataSearch>
      <TableRow><Chevron w={12} sw={1} color="#605e5c" /><GridTable />CustomerData</TableRow>
      {fields.map(([n, k]) => (
        <FieldRow key={n}>
          {k === "date" ? <Chevron w={12} sw={1} dir="right" color="#605e5c" /> : <span />}
          <CheckBox />
          {fieldIcons[k] ?? <span />}
          <span>{n}</span>
        </FieldRow>
      ))}
      <TableRow><Chevron w={12} sw={1} dir="right" color="#605e5c" /><GridTable />SalesData</TableRow>
    </Pane>
    <RightRail>
      <RailButton $on><Icon w={16} h={20}><ellipse cx="8" cy="4" rx="6.500" ry="2.500" fill="#fff" /><path d="M1.500 4v12c0 3.300 13 3.300 13 0V4" fill="#fff" /><ellipse cx="8" cy="4" rx="6.500" ry="2.500" /></Icon></RailButton>
      <RailButton $on><Icon w={20}><path d="M2 18V8h5v10zM7 18V2h5v16zM12 5h4v4" fill="#fff" /><path d="M10.500 10v7c0 2 8 2 8 0v-7" fill="#fff" stroke="#d9730d" /><ellipse cx="14.500" cy="10" rx="4" ry="1.500" fill="#fff" stroke="#d9730d" /></Icon></RailButton>
      <RailButton><Icon w={20}><path d="M2 16V7h4.500M6.500 14V1.500H11V10M11 5h4v3M2 16h3" /><path d="M19 7l-7 7-2-2 7-6z" fill="#fff" /><path d="M10 12l2 2c0 4-4 5-7 4 2-1 2-2 2-4s2-2 3-2z" fill="#83beec" stroke={BLUE} /></Icon></RailButton>
      <RailButton><Icon w={20}><rect x="6" y="2" width="12" height="17" fill="#fff" /><path d="M9 10.500h7M9 13.500h7M9 16.500h7" strokeWidth="2" strokeDasharray="2 .500" /><path d="M10 5h6v2h-6z" fill={GREY} /><g transform="translate(0 .5) scale(.720)">{Bolt}</g></Icon></RailButton>
      <RailButton><Icon w={18} sw={1.300} color="#111"><path d="M9 0v18M0 9h18" /></Icon></RailButton>
      <GearSlot><Icon w={20} sw={1.300}><circle cx="10" cy="10" r="3" /><path d="M8.200 1h3.600l.7 2.500 1.900 1.100 2.500-.7 1.800 3.100L16.900 9v2l1.800 2-1.800 3.100-2.500-.7-1.900 1.100-.7 2.500H8.200l-.7-2.500-1.900-1.100-2.500.7L1.300 13l1.800-2V9L1.300 7l1.800-3.100 2.500.7 1.900-1.100z" /></Icon></GearSlot>
    </RightRail>
  </Main>
);

/* ---------- status bar ---------- */

const StatusBar = styled.div`
  display: flex; align-items: center; height: 25px; border-top: 1px solid #d2d0ce; border-bottom: 1px solid #000; background: #f3f2f1; padding: 1px 18px 0 4px; font-size: 12px;
  letter-spacing: -0.2px; color: #3b3a39; span { margin-right: auto; }
`;
const ZoomValue = styled.div`width: 52px; padding-left: 10px; color: #605e5c; font-size: 12px; letter-spacing: -0.500px;`;

/* ---------- taskbar ---------- */

const Taskbar = styled.footer`
  display: flex; align-items: center; height: 48px; padding-left: 318px; background: linear-gradient(90deg, #e3f0f7 0, #e1eef8 24%, #d5dff8 36%, #dcdcef 58%, #d5e0f7 66%, #e4eef7 85%, #e3eff7 100%);
`;
const TaskSearch = styled.div`
  display: flex; align-items: center; gap: 11px; width: 218px; height: 32px; margin: 0 3px 0 14px; padding-left: 9px; border-radius: 16px; background: #f4f7fd; border: 1px solid #cfd6e6;
  font-size: 12.500px; color: #5a5a5a;
`;
const TaskItem = styled.div<{ $on?: boolean; $run?: boolean }>`
  width: 38px; height: 38px; margin: 0 3px; display: grid; place-items: center; border-radius: 4px; position: relative; background: ${(p) => (p.$on ? "#eef2fb" : "transparent")};
  &::after { content: ""; display: ${(p) => (p.$on || p.$run ? "block" : "none")}; position: absolute; bottom: 0; width: ${(p) => (p.$on ? 16 : 6)}px; height: 3px; border-radius: 2px; background: ${(p) => (p.$on ? "#0067c0" : "#797c85")}; }
`;
const Tray = styled.div`margin-left: auto; display: flex; align-items: center; gap: 8px; padding-right: 20px; > svg:first-child { margin-right: 5px; }`;
const Clock = styled.div`width: 57px; margin-right: 3px; text-align: right; font-size: 11.500px; letter-spacing: -0.300px; line-height: 16px; color: #1b1b1b; white-space: nowrap;`;

const Office = ({ c, d, l }: { c: string; d: string; l: string }) => (
  <svg width="24" height="24"><rect x="9" y="3" width="14" height="18" fill="#fff" stroke={c} /><path d="M14 7h7M14 10h7M14 13h7M14 16h7" stroke={c} strokeWidth="1.500" /><path d="M1 3l13-3v24L1 21z" fill={d} /><text x={l === "W" ? 1.8 : 3.5} y="16.500" fontSize="11" fontWeight="700" fill="#fff" fontFamily="Open Sans, sans-serif">{l}</text></svg>
);

const taskIcons: { id: string; on?: boolean; run?: boolean; node: React.ReactNode }[] = [
  { id: "view", node: <svg width="24" height="24"><defs><linearGradient id="tv" x2="1" y2="1"><stop stopColor="#fff" /><stop offset="1" stopColor="#d0d0d4" /></linearGradient></defs><rect x="1" y="6" width="17" height="17" rx="1" fill="#2b2b2b" /><rect x="7" y="1" width="16" height="16" rx="1" fill="url(#tv)" /><path d="M7 6h11v11H7z" fill="#b5b5b8" /></svg> },
  { id: "widgets", node: <svg width="24" height="24"><rect x=".5" y="1" width="23" height="22" rx="1.500" fill="#0b62b5" /><rect x="3" y="3" width="9" height="18" fill="#f6fbff" /><rect x="13.500" y="3" width="8" height="11" fill="#5fd3fb" /><rect x="13.500" y="14" width="8" height="7" fill="#1793ee" /></svg> },
  { id: "chat", node: <svg width="24" height="24"><path d="M12 1a11 11 0 1 1-5 20.500L1 23l1.500-5.500A11 11 0 0 1 12 1z" fill="#5b5fc7" /><rect x="5" y="8" width="9" height="8" rx="1.500" fill="#fff" /><path d="M15 11l4-2.500v7L15 13z" fill="#fff" /></svg> },
  { id: "edge", node: <svg width="24" height="24"><defs><linearGradient id="eg" x2="1"><stop stopColor="#1aa2dc" /><stop offset="1" stopColor="#5fd35a" /></linearGradient></defs><circle cx="12" cy="12" r="11.500" fill="#1173c8" /><path d="M1 9C2 3.500 7 .5 12 .5c7 0 11.500 5 11.500 10 0 3-2.500 5-5.500 5-3 0-4-1-3.500-2 1-2 0-6-5-6-3 0-6 .5-8.500 1.500z" fill="url(#eg)" /><path d="M9 12c-1 6 5 9 12 6-2 2.500-5 5-9 5-5-1-6-8-3-11z" fill="#0d58a6" /><path d="M9.500 11c2-2 5-1 5 2-.5 3 3 3.500 7 2l1 2c-5 3-13 2-13-6z" fill="#dfeaf8" /></svg> },
  { id: "files", node: <svg width="24" height="24"><path d="M0 3q0-1.500 1.500-1.500h7L11 4v3H0z" fill="#e0a11b" /><path d="M0 5h23q1 0 1 1v16H0z" fill="#ffcf48" /><path d="M5 22v-4q0-2 2-2h10q2 0 2 2v4z" fill="#1580d6" /></svg> },
  { id: "store", node: <svg width="24" height="24"><path d="M7 6V2h10v4" fill="none" stroke="#22b2f0" strokeWidth="1.800" /><rect x=".5" y="5" width="23" height="18.500" rx="2" fill="#14528c" /><path d="M7.500 10h4v4h-4z" fill="#f25022" /><path d="M12.500 10h4v4h-4z" fill="#7fba00" /><path d="M7.500 15h4v4h-4z" fill="#00a4ef" /><path d="M12.500 15h4v4h-4z" fill="#ffb900" /></svg> },
  { id: "excel", node: <Office c="#1f7a48" d="#1d6f42" l="X" /> },
  { id: "word", node: <Office c="#2b5797" d="#2a5699" l="W" /> },
  { id: "chrome", run: true, node: <svg width="24" height="24"><circle cx="12" cy="12" r="11.500" fill="#fbc116" /><path d="M12 12L2 6.300A11.500 11.500 0 0 1 22 6.300H12z" fill="#e33b2e" /><path d="M2 6.300l5 8.700 5 3-3 5.100A11.500 11.500 0 0 1 2 6.300z" fill="#2da94f" /><circle cx="12" cy="12" r="5.800" fill="#fff" /><circle cx="12" cy="12" r="4.500" fill="#2f74e0" /></svg> },
  { id: "opera", node: <svg width="24" height="24"><ellipse cx="12" cy="12" rx="11" ry="11.500" fill="#e01a2b" /><ellipse cx="12" cy="12" rx="5" ry="8.500" fill="#dde2f2" /></svg> },
  { id: "pbi", on: true, node: <svg width="24" height="24"><rect width="24" height="24" fill="#0a74da" /><rect x="13" y="4" width="6" height="16" rx=".8" fill="#d99a15" /><rect x="9.500" y="8" width="6" height="12" rx=".8" fill="#f0c233" /><rect x="5.500" y="12" width="6" height="8" rx=".8" fill="#ffe27a" /></svg> },
];

const BottomBars = () => (
  <>
    <StatusBar>
      <span>Page 2 of 2</span>
      <Icon w={126} h={14}><path d="M2 7h4" stroke="#605e5c" strokeWidth="1.500" /><path d="M9 7h100M59 4v6" stroke="#605e5c" /><rect x="40" y="2" width="4" height="11" fill="#605e5c" stroke="none" /><path d="M115 7h8M119 3v8" stroke="#484644" /></Icon>
      <ZoomValue>68%</ZoomValue>
      <Icon w={16} h={12}><rect x=".6" y=".6" width="14.800" height="10.800" stroke="#5b4a6a" /><path d="M3 5V3h2M11 3h2v2M13 7v2h-2M5 9H3V7" /></Icon>
    </StatusBar>
    <Taskbar>
      <svg width="23" height="23"><defs><linearGradient id="win" x2="1" y2="1"><stop stopColor="#4cc9f9" /><stop offset="1" stopColor="#0270cf" /></linearGradient></defs><path d="M0 0h11v11H0zM12 0h11v11H12zM0 12h11v11H0zM12 12h11v11H12z" fill="url(#win)" /></svg>
      <TaskSearch><Icon w={15} sw={1.800} color="#222"><circle cx="9" cy="6.500" r="5" /><path d="M5.500 10L1 14.500" /></Icon>Search</TaskSearch>
      {taskIcons.map((t) => <TaskItem key={t.id} $on={t.on} $run={t.run}>{t.node}</TaskItem>)}
      <Tray>
        <Chevron w={13} dir="up" sw={1.300} />
        <Icon w={17} h={14} sw={1.300} color="#1b1b1b"><path d="M1 5c4-5 11-5 15 0M3.500 7.500c3-3.500 7-3.500 10 0M6 10c1.500-2 3.500-2 5 0" /><circle cx="8.500" cy="12" r="1" /></Icon>
        <Icon w={16} h={14} color="#1b1b1b"><path d="M1 5v4h2.500L7 12.500v-11L3.500 5zM9 4.500c1.500 1 1.500 4 0 5M11 3c3 2 3 6 0 8M13 1.500c4 3 4 8 0 11" /></Icon>
        <Icon w={17} h={14} color="#1b1b1b"><rect x="4" y="4" width="10.500" height="8" rx="1" strokeWidth="1.500" /><path d="M7 6h6v4H6z" fill="#1b1b1b" /><path d="M15.500 6.500v3M3 0v3M6 0v3M1.500 3h5v2q0 2-2.500 2t-2.500-2zM4 7v5" strokeWidth="1.300" /></Icon>
        <Clock>2:16 PM<br />11/5/2024</Clock>
        <Icon w={13} h={15} color="#1b1b1b"><path d="M5 1c9 1 9 13-1 12.500C2 13 1 12 1 12 7 12 8 6 5 1z" /></Icon>
      </Tray>
    </Taskbar>
  </>
);

const Window = styled.div`width: 1366px; height: 768px; overflow: hidden; display: flex; flex-direction: column; background: #f3f2f1;`;

export default function App() {
  return (
    <>
      <Global />
      <Window>
        <Header />
        <Menu />
        <RibbonBar />
        <MainArea />
        <BottomBars />
      </Window>
    </>
  );
}
